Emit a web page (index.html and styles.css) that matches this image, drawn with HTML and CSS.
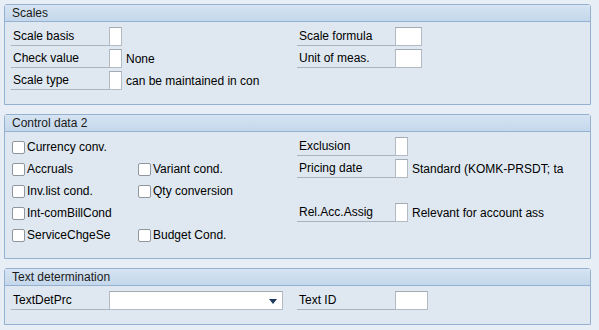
FILE: index.html
```html
<!DOCTYPE html>
<html lang="en">
<head>
    <meta charset="UTF-8">
    <title>Condition Type - Scales</title>
    <link rel="stylesheet" href="styles.css">
</head>
<body>
    <section class="panel">
        <div class="panel-head">Scales</div>
        <div class="panel-body cols">
            <div class="col">
                <div class="row"><span class="lbl">Scale basis</span><span class="fld"></span></div>
                <div class="row"><span class="lbl">Check value</span><span class="fld"></span><span class="desc">None</span></div>
                <div class="row"><span class="lbl">Scale type</span><span class="fld"></span><span class="desc">can be maintained in con</span></div>
            </div>
            <div class="col">
                <div class="row"><span class="lbl">Scale formula</span><span class="fld wide"></span></div>
                <div class="row"><span class="lbl">Unit of meas.</span><span class="fld wide"></span></div>
            </div>
        </div>
    </section>

    <section class="panel">
        <div class="panel-head">Control data 2</div>
        <div class="panel-body cols">
            <div class="col checks">
                <label class="chk"><span class="box"></span>Currency conv.</label>
                <span></span>
                <label class="chk"><span class="box"></span>Accruals</label>
                <label class="chk"><span class="box"></span>Variant cond.</label>
                <label class="chk"><span class="box"></span>Inv.list cond.</label>
                <label class="chk"><span class="box"></span>Qty conversion</label>
                <label class="chk"><span class="box"></span>Int-comBillCond</label>
                <span></span>
                <label class="chk"><span class="box"></span>ServiceChgeSe</label>
                <label class="chk"><span class="box"></span>Budget Cond.</label>
            </div>
            <div class="col">
                <div class="row"><span class="lbl">Exclusion</span><span class="fld"></span></div>
                <div class="row"><span class="lbl">Pricing date</span><span class="fld"></span><span class="desc">Standard (KOMK-PRSDT; ta</span></div>
                <div class="row"></div>
                <div class="row"><span class="lbl">Rel.Acc.Assig</span><span class="fld"></span><span class="desc">Relevant for account ass</span></div>
            </div>
        </div>
    </section>

    <section class="panel">
        <div class="panel-head">Text determination</div>
        <div class="panel-body cols">
            <div class="col">
                <div class="row"><span class="lbl">TextDetPrc</span><span class="fld select"><span class="arrow"></span></span></div>
            </div>
            <div class="col">
                <div class="row"><span class="lbl">Text ID</span><span class="fld textid"></span></div>
            </div>
        </div>
    </section>
</body>
</html>
```

FILE: styles.css
```css
body {
    margin: 0;
    padding: 4px 0 0 4px;
    background-color: #e8eef5;
    font-family: "Liberation Sans", Arial, sans-serif;
    font-size: 12px;
    color: #000;
}

.panel {
    width: 585px;
    border: 1px solid #94b1d1;
    border-radius: 3px 3px 0 0;
    background-color: #dfe8f1;
    margin-bottom: 9px;
}

.panel-head {
    height: 16px;
    line-height: 16px;
    padding-left: 7px;
    border-bottom: 1px solid #94b1d1;
    background: linear-gradient(#d6e4f2, #c4d7eb);
    color: #1a1a1a;
}

.panel-body {
    padding: 5px 6px 11px 6px;
}

.cols {
    display: grid;
    grid-template-columns: 286px 1fr;
}

.row {
    display: flex;
    align-items: flex-start;
    height: 22px;
}

.lbl {
    width: 96px;
    height: 18px;
    line-height: 19px;
    padding-left: 2px;
    border-bottom: 1px solid #a9b4bf;
    white-space: nowrap;
}

.fld {
    position: relative;
    width: 11px;
    height: 17px;
    border: 1px solid #b3bac3;
    border-top-color: #a3abb5;
    background-color: #fff;
}

.fld.wide {
    width: 25px;
}

.fld.textid {
    width: 31px;
}

.fld.select {
    width: 172px;
}

.arrow {
    position: absolute;
    right: 5px;
    top: 7px;
    width: 0;
    height: 0;
    border-left: 4px solid transparent;
    border-right: 4px solid transparent;
    border-top: 5px solid #1f3a60;
}

.desc {
    height: 19px;
    line-height: 20px;
    padding-left: 4px;
    white-space: nowrap;
}

.checks {
    display: grid;
    grid-template-columns: 126px 1fr;
    grid-auto-rows: 22px;
}

.chk {
    display: flex;
    align-items: center;
    height: 20px;
    padding-left: 1px;
    white-space: nowrap;
}

.box {
    width: 11px;
    height: 11px;
    margin-right: 2px;
    border: 1px solid #8f969e;
    border-radius: 2px;
    background-color: #fff;
}
```
